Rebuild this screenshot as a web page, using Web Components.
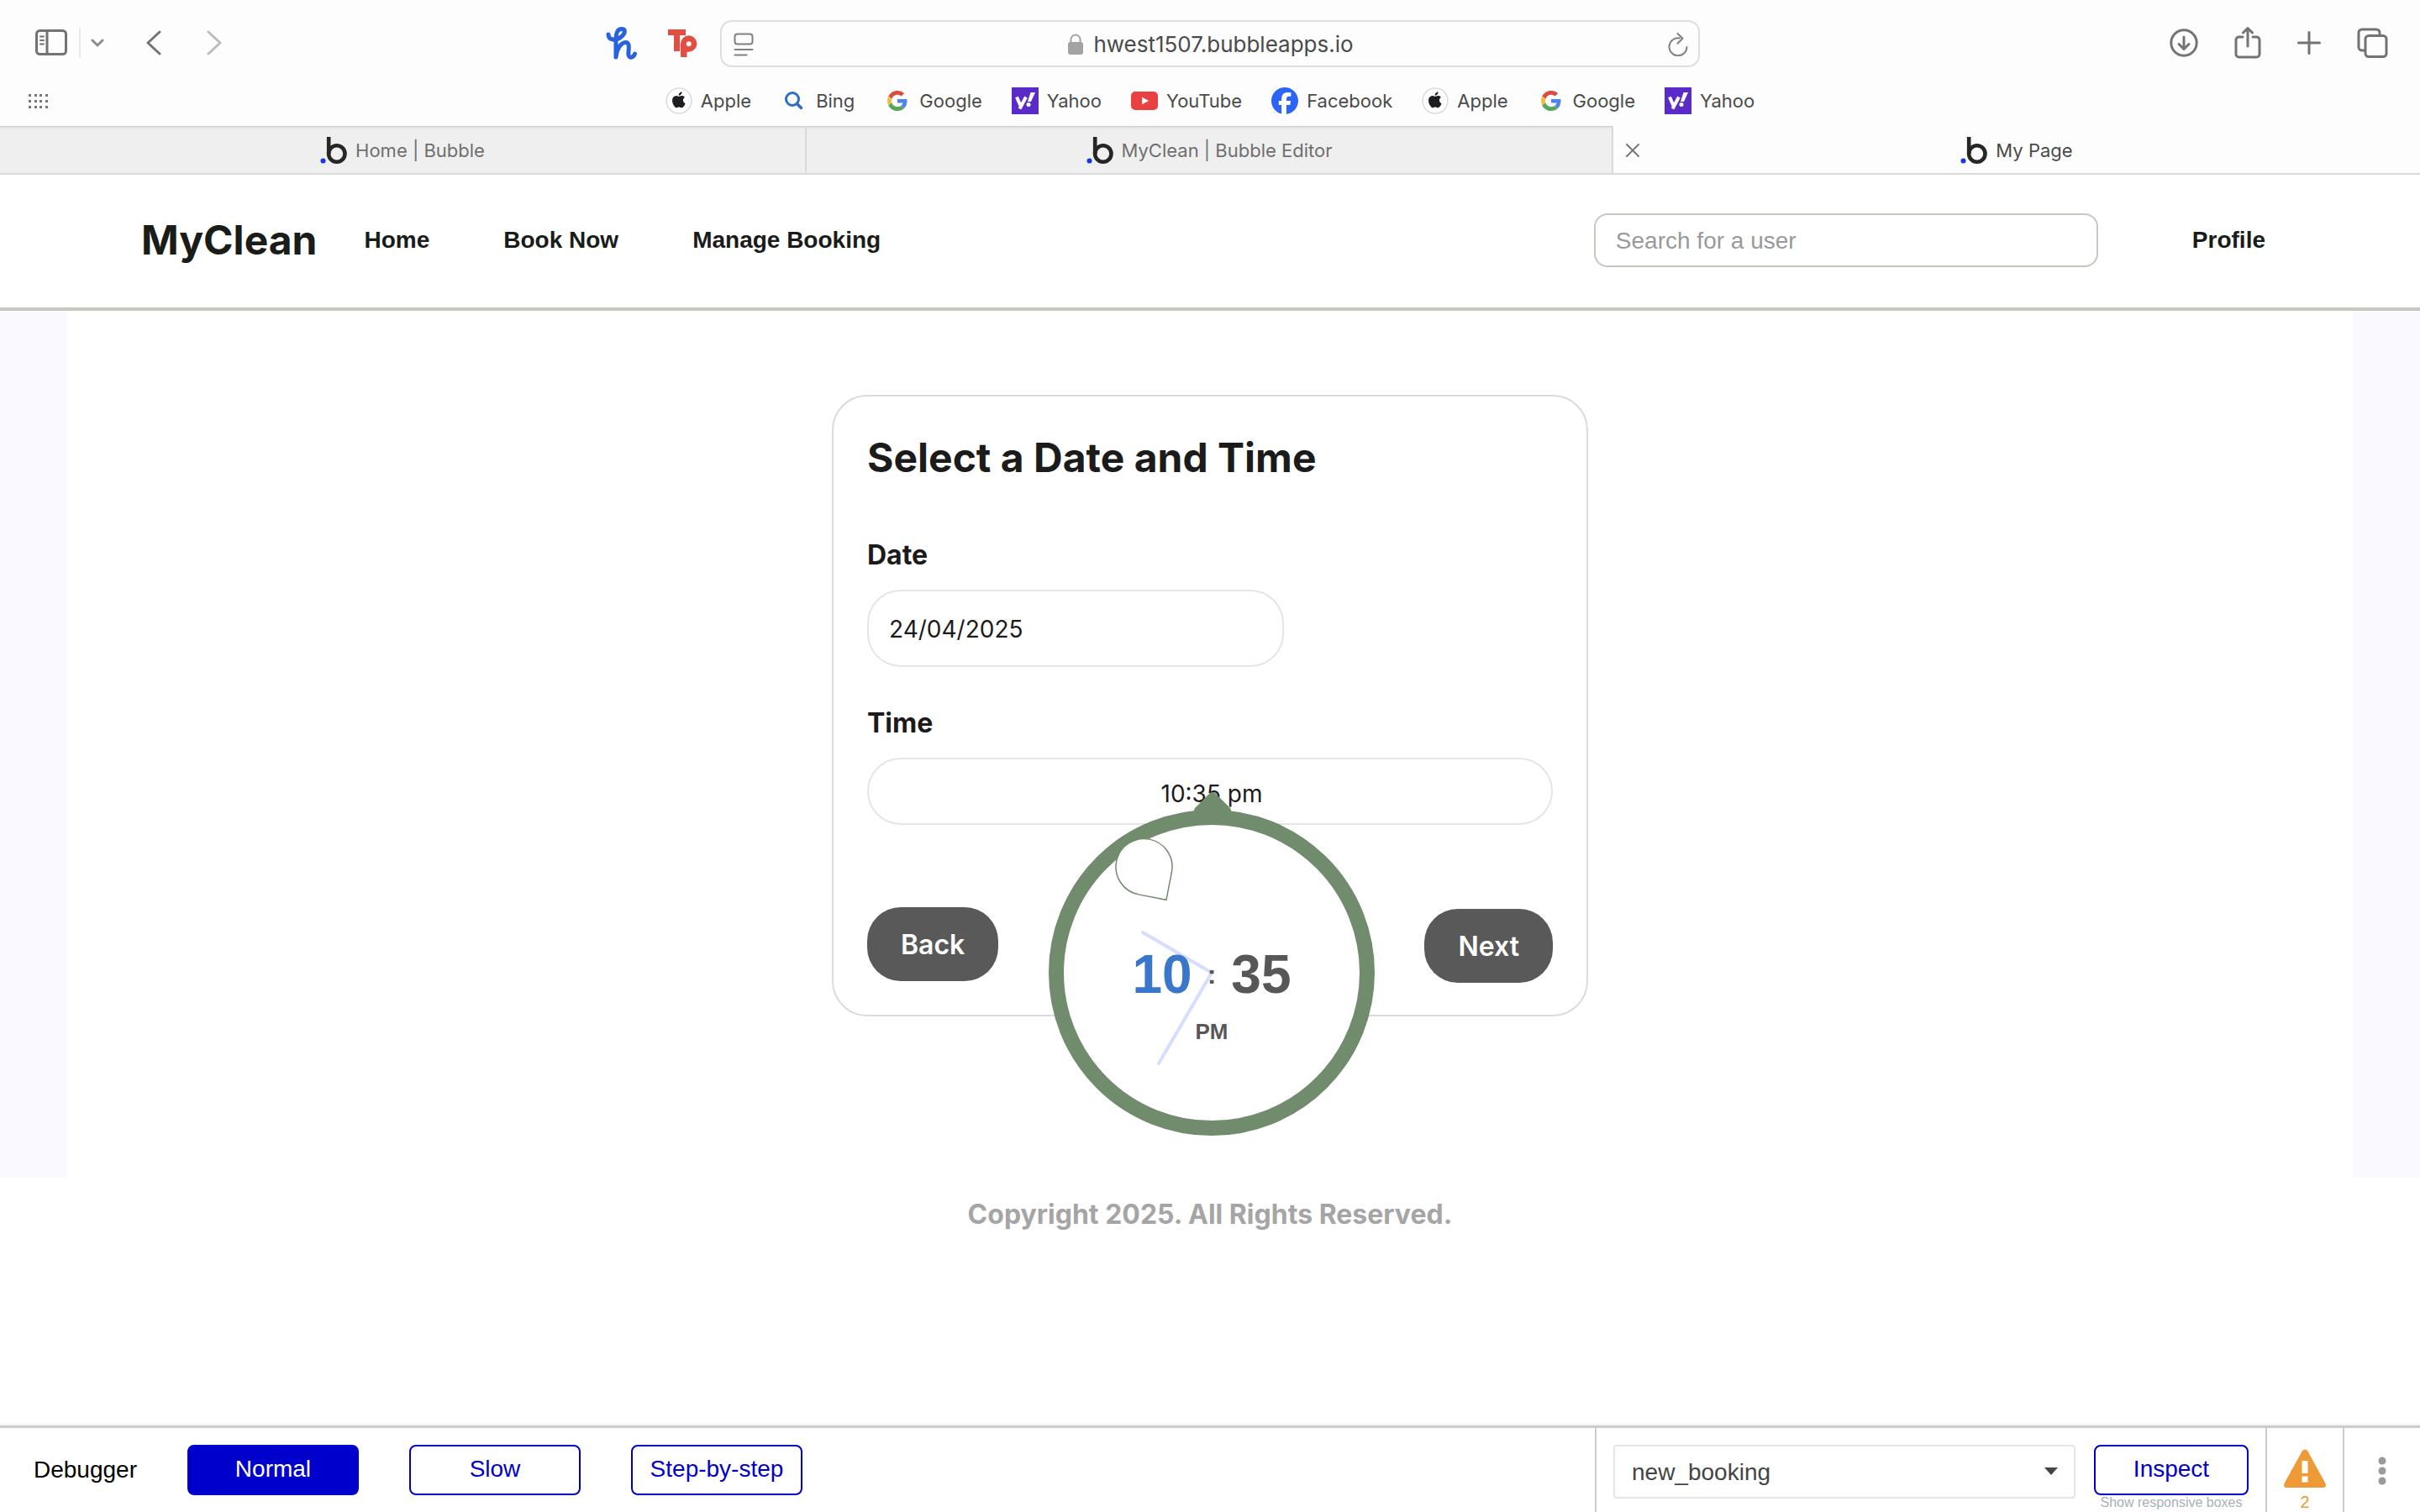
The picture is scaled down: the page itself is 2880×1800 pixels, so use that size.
<!DOCTYPE html>
<html lang="en">
<head>
<meta charset="utf-8">
<title>My Page</title>
<style>
  body { margin: 0; background: #fff; font-family: "Liberation Sans", Arial, sans-serif; }
</style>
</head>
<body>
<my-app></my-app>
<script>
const define = (name, html, setup) => {
  const template = document.createElement('template');
  template.innerHTML = '<style>*{box-sizing:border-box}button,input,select{font:inherit;color:inherit;margin:0}button{cursor:pointer}a{color:inherit;text-decoration:none}</style>' + html;
  customElements.define(name, class extends HTMLElement {
    constructor() {
      super();
      this.attachShadow({ mode: 'open' }).append(document.importNode(template.content, true));
    }
    connectedCallback() { if (setup) setup(this, this.shadowRoot); }
  });
};

/* [width, height, markup] */
const line = 'fill="none" stroke="currentColor" stroke-linecap="round" stroke-linejoin="round"';
const ICONS = {
  sidebar: [38, 32, `<g ${line} stroke-width="3"><rect x="1.5" y="1.5" width="35" height="28" rx="4"/><path d="M14 2v27"/><path stroke-width="2" d="M6 8.500h4M6 13h4M6 17.500h4"/></g>`],
  down: [16, 10, `<path ${line} stroke-width="3" d="M2 2l6 6 6-6"/>`],
  back: [20, 30, `<path ${line} stroke-width="3" d="M17 2L3 15l14 13"/>`],
  forward: [20, 30, `<path ${line} stroke-width="3" d="M3 2l14 13L3 28"/>`],
  honey: [37, 39, `<path ${line} stroke-width="5" d="M3 9C3 16 12 17 18 12C24 7 23.500 2.500 18.500 2.500C13 2.500 12 9 12 16V36C12.500 27 18 18.500 23.500 18.500C30 18.500 26 30 27 33.500C28.500 38 33 36.500 34.500 32"/>`],
  teach: [37, 35, `<g fill="#e04f42"><path d="M1 1h21v7h-7v19H8V8H1z"/><path fill-rule="evenodd" d="M16 18a9.700 9.700 0 1 1 9.700 9.700H23.500V34H16zM25.700 15.300a3 3 0 1 0 0 6 3 3 0 1 0 0-6z" stroke="#fdfdfd" stroke-width="1" paint-order="stroke"/></g>`],
  reader: [24, 28, `<g ${line} stroke-width="2"><rect x="1.500" y="1.500" width="21" height="12" rx="3"/><path d="M1.500 20h21M1.500 26.500h14"/></g>`],
  lock: [18, 26, `<rect y="10" width="18" height="15" rx="3" fill="currentColor"/><path d="M3.500 11V7a5.500 5.500 0 0 1 11 0v4" fill="none" stroke="currentColor" stroke-width="2"/>`],
  reload: [24, 28, `<path ${line} stroke-width="2" d="M14 6.500A10.500 10.500 0 1 0 22.500 17M11.500 1l6 5.700-6 6"/>`],
  download: [34, 34, `<g ${line} stroke-width="3"><circle cx="17" cy="17" r="15.200"/><path d="M17 10v14M11 18.500l6 6 6-6"/></g>`],
  share: [32, 38, `<g ${line} stroke-width="3"><path d="M10 12H5.500A3.500 3.500 0 0 0 2 15.500V32.500A3.500 3.500 0 0 0 5.500 36H26.500A3.500 3.500 0 0 0 30 32.500V15.500A3.500 3.500 0 0 0 26.500 12H22M16 2v21M10.500 7L16 1.700 21.500 7"/></g>`],
  plus: [28, 28, `<path ${line} stroke-width="3" d="M14 1.500v25M1.500 14h25"/>`],
  tabs: [37, 36, `<g ${line} stroke-width="3"><rect x="10" y="9.500" width="25" height="25" rx="4"/><path d="M9 27H6a4 4 0 0 1-4-4V6a4 4 0 0 1 4-4H23a4 4 0 0 1 4 4V9"/></g>`],
  grid: [24, 18, [1, 8, 15].map(y => [0, 7, 13, 20].map(x => `<rect x="${x}" y="${y}" width="3" height="3" fill="currentColor"/>`).join('')).join('')],
  close: [16, 16, `<path ${line} stroke-width="2" d="M1 1l14 14M15 1L1 15"/>`],
  apple: [32, 32, `<circle cx="16" cy="16" r="15" fill="#fff" stroke="#dcdcdc" stroke-width="1.500"/><path fill="#1d1d1f" transform="translate(6.300 5.300) scale(.79)" d="M12.152 6.896c-.948 0-2.415-1.078-3.960-1.040-2.040.027-3.910 1.183-4.961 3.014-2.117 3.675-.546 9.103 1.519 12.090 1.013 1.454 2.208 3.090 3.792 3.039 1.520-.065 2.090-.987 3.935-.987 1.831 0 2.350.987 3.960.948 1.637-.026 2.676-1.480 3.676-2.948 1.156-1.688 1.636-3.325 1.662-3.415-.039-.013-3.182-1.221-3.220-4.857-.026-3.040 2.480-4.494 2.597-4.559-1.429-2.090-3.623-2.324-4.390-2.376-2-.156-3.675 1.090-4.610 1.090zM15.530 3.830c.843-1.012 1.400-2.427 1.245-3.830-1.207.052-2.662.805-3.532 1.818-.780.896-1.454 2.338-1.273 3.714 1.338.104 2.715-.688 3.559-1.701"/>`],
  bing: [32, 32, `<g fill="none" stroke="#2f6fbd" stroke-linecap="round"><circle cx="14" cy="14" r="7.500" stroke-width="3"/><path stroke-width="3.500" d="M19.500 19.500l5 5"/></g>`],
  google: [32, 32, `<g transform="translate(4 4) scale(.5)"><path fill="#dc4b3e" d="M24 9.500c3.540 0 6.710 1.220 9.210 3.600l6.850-6.850C35.900 2.380 30.470 0 24 0 14.620 0 6.510 5.380 2.560 13.220l7.980 6.190C12.430 13.720 17.740 9.500 24 9.500z"/><path fill="#5083ec" d="M46.980 24.550c0-1.570-.150-3.090-.380-4.550H24v9.020h12.940c-.580 2.960-2.260 5.480-4.780 7.180l7.730 6c4.510-4.180 7.090-10.360 7.090-17.650z"/><path fill="#f2bd42" d="M10.530 28.590c-.480-1.450-.760-2.990-.760-4.590s.270-3.140.760-4.590l-7.980-6.190C.920 16.460 0 20.120 0 24c0 3.880.920 7.540 2.560 10.780l7.970-6.190z"/><path fill="#58a65c" d="M24 48c6.480 0 11.930-2.130 15.890-5.810l-7.730-6c-2.150 1.450-4.920 2.300-8.160 2.300-6.260 0-11.570-4.220-13.470-9.910l-7.980 6.190C6.510 42.620 14.620 48 24 48z"/></g>`],
  yahoo: [32, 32, `<rect width="32" height="32" fill="#5a2bc8"/><path fill="none" stroke="#fff" stroke-width="4" d="M6 11.500l5 11.500M17 11.500L9.500 25.500"/><path fill="#fff" d="M22.500 6h5.500l-5 11h-4z"/><circle cx="20" cy="20.500" r="2.500" fill="#fff"/>`],
  youtube: [32, 32, `<rect y="5" width="32" height="22" rx="5" fill="#ea4040"/><path fill="#fff" d="M13 11.500l8 4.500-8 4.500z"/>`],
  facebook: [32, 32, `<circle cx="16" cy="16" r="15" fill="#fff"/><path fill="#2b64f6" transform="scale(1.333)" d="M9.101 23.691v-7.980H6.627v-3.667h2.474v-1.580c0-4.085 1.848-5.978 5.858-5.978.401 0 .955.042 1.468.103a8.680 8.680 0 0 1 1.141.195v3.325a8.623 8.623 0 0 0-.653-.036 26.805 26.805 0 0 0-.733-.009c-.707 0-1.259.096-1.675.309a1.686 1.686 0 0 0-.679.622c-.258.420-.374.995-.374 1.752v1.297h3.919l-.386 2.103-.287 1.564h-3.246v8.245C19.396 23.238 24 18.179 24 12.044c0-6.627-5.373-12-12-12s-12 5.373-12 12c0 5.628 3.874 10.350 9.101 11.647Z"/>`],
  bubble: [32, 32, `<circle cx="3.500" cy="28.500" r="3" fill="#1433ff"/><circle cx="19.800" cy="20" r="9.700" fill="none" stroke="#262626" stroke-width="4.600"/><path d="M10.200 0v20" stroke="#262626" stroke-width="4.600"/>`],
  caret: [18, 10, `<path d="M1 0h16l-8 9z" fill="currentColor"/>`],
  warning: [50, 46, `<path fill="currentColor" d="M22 2Q25-1 28 2L49.500 41Q51 46 47 46H3Q-1 46 .500 41z"/><path fill="#fff" d="M21.500 14h7v15h-7zM21.500 32.500h7v7h-7z"/>`],
  more: [10, 36, `<g fill="currentColor"><circle cx="5" cy="6" r="4.500"/><circle cx="5" cy="18" r="4.500"/><circle cx="5" cy="30" r="4.500"/></g>`]
};
define('app-icon', '<style>:host{display:block;flex:none;line-height:0}</style><span></span>', (el, root) => {
  const [w, h, body] = ICONS[el.getAttribute('name')];
  root.querySelector('span').innerHTML = `<svg width="${w}" height="${h}" viewBox="0 0 ${w} ${h}" aria-hidden="true">${body}</svg>`;
});

define('icon-button', `
<style>
  :host { display: block; flex: none; }
  button { display: block; padding: 0; border: 0; background: none; }
</style>
<button type="button"><slot></slot></button>`, (el, root) => {
  root.querySelector('button').setAttribute('aria-label', el.getAttribute('label'));
});

define('browser-toolbar', `
<style>
  :host { display: grid; grid-template-columns: 1fr minmax(0, 1166px) 1fr; padding-top: 24px; color: #737373; }
  .side { display: flex; align-items: center; padding-bottom: 2px; }
  .left { padding-left: 42px; padding-right: 26px; }
  .right { justify-content: flex-end; gap: 43px; padding-right: 38px; }
  .rule { width: 2px; height: 36px; margin: 0 12px 0 14px; background: #e9e9e9; }
  .down { color: #8c8c8c; }
  .back { margin: 0 52px 0 49px; }
  .forward { color: #bdbdbd; }
  .ext { display: flex; align-items: center; gap: 36px; margin-left: auto; color: #2a62dd; }
  .address { display: flex; align-items: center; justify-content: space-between; height: 56px; padding: 2px 12px 0 14px; border: 2px solid #dedede; border-radius: 14px; color: #808080; }
  .url { display: flex; align-items: center; gap: 12px; font: 26px/32px Inter, sans-serif; color: #4a4a4a; }
  .lock { color: #a3a3a3; }
</style>
<div class="side left">
  <icon-button label="Sidebar"><app-icon name="sidebar"></app-icon></icon-button>
  <span class="rule"></span>
  <icon-button class="down" label="Tab groups"><app-icon name="down"></app-icon></icon-button>
  <icon-button class="back" label="Back"><app-icon name="back"></app-icon></icon-button>
  <icon-button class="forward" label="Forward"><app-icon name="forward"></app-icon></icon-button>
  <div class="ext">
    <icon-button label="Honey"><app-icon name="honey"></app-icon></icon-button>
    <icon-button label="Extension"><app-icon name="teach"></app-icon></icon-button>
  </div>
</div>
<div class="address">
  <icon-button label="Reader"><app-icon name="reader"></app-icon></icon-button>
  <div class="url"><app-icon class="lock" name="lock"></app-icon><span>hwest1507.bubbleapps.io</span></div>
  <icon-button label="Reload"><app-icon name="reload"></app-icon></icon-button>
</div>
<div class="side right">
  <icon-button label="Downloads"><app-icon name="download"></app-icon></icon-button>
  <icon-button label="Share"><app-icon name="share"></app-icon></icon-button>
  <icon-button label="New tab"><app-icon name="plus"></app-icon></icon-button>
  <icon-button label="Tab overview"><app-icon name="tabs"></app-icon></icon-button>
</div>`);

define('bookmark-link', `
<style>
  :host { display: block; }
  a { display: flex; align-items: center; gap: 10px; font: 22px/32px Inter, sans-serif; color: #4a4a4a; }
</style>
<a href="#"><span></span><slot></slot></a>`, (el, root) => {
  root.querySelector('span').innerHTML = `<app-icon name="${el.getAttribute('icon')}"></app-icon>`;
});

define('bookmark-bar', `
<style>
  :host { display: grid; grid-template-columns: 1fr auto 1fr; align-items: center; padding: 24px 0 14px; }
  .grid { padding-left: 34px; color: #777; }
  nav { display: flex; gap: 35px; }
</style>
<icon-button class="grid" label="Favourites"><app-icon name="grid"></app-icon></icon-button>
<nav>
  <bookmark-link icon="apple">Apple</bookmark-link>
  <bookmark-link icon="bing">Bing</bookmark-link>
  <bookmark-link icon="google">Google</bookmark-link>
  <bookmark-link icon="yahoo">Yahoo</bookmark-link>
  <bookmark-link icon="youtube">YouTube</bookmark-link>
  <bookmark-link icon="facebook">Facebook</bookmark-link>
  <bookmark-link icon="apple">Apple</bookmark-link>
  <bookmark-link icon="google">Google</bookmark-link>
  <bookmark-link icon="yahoo">Yahoo</bookmark-link>
</nav>`);

define('browser-tab', `
<style>
  :host { display: grid; grid-template-columns: 1fr auto 1fr; align-items: center; box-sizing: border-box; height: 58px; padding-top: 2px; border-right: 2px solid #dadada; border-bottom: 2px solid #dadada; background: linear-gradient(#c6c6c6, #e6e6e6 2px, #efefef 5px); font: 22px/32px Inter, sans-serif; color: #6f6f6f; }
  :host([active]) { border-right: 0; background: #fdfdfd; color: #4a4a4a; }
  .close { padding-left: 15px; color: #777; visibility: hidden; }
  :host([active]) .close { visibility: visible; }
  .title { display: flex; align-items: center; gap: 10px; }
</style>
<icon-button class="close" label="Close tab"><app-icon name="close"></app-icon></icon-button>
<div class="title"><app-icon name="bubble"></app-icon><slot></slot></div>`);

define('browser-chrome', `
<style>
  :host { display: block; background: #fdfdfd; }
  .tabs { display: grid; grid-template-columns: repeat(3, 1fr); }
</style>
<browser-toolbar></browser-toolbar>
<bookmark-bar></bookmark-bar>
<div class="tabs">
  <browser-tab>Home | Bubble</browser-tab>
  <browser-tab>MyClean | Bubble Editor</browser-tab>
  <browser-tab active>My Page</browser-tab>
</div>`);

define('site-header', `
<style>
  :host { display: flex; align-items: center; box-sizing: border-box; height: 162px; padding: 0 184px 2px 168px; border-bottom: 4px solid #c2c9bf; font-weight: 700; font-size: 28px; line-height: 32px; color: #191c19; }
  .brand { font: 700 48px/58px Inter, sans-serif; }
  nav { display: flex; gap: 88px; margin-left: 56px; }
  input { width: 600px; height: 64px; margin: 0 112px 0 auto; padding: 2px 24px 0; border: 2px solid #c2c9bf; border-radius: 16px; background: #fff; font-weight: 400; outline: 0; }
  input::placeholder { color: #999; opacity: 1; }
</style>
<a class="brand" href="#">MyClean</a>
<nav><a href="#">Home</a><a href="#">Book Now</a><a href="#">Manage Booking</a></nav>
<input type="search" placeholder="Search for a user" aria-label="Search for a user">
<a href="#">Profile</a>`);

define('clock-picker', `
<style>
  :host { display: grid; width: 388px; height: 388px; color: #575757; font-family: "Liberation Sans", Arial, sans-serif; font-weight: 700; }
  svg { grid-area: 1 / 1; overflow: visible; }
  .face { grid-area: 1 / 1; display: flex; flex-direction: column; align-items: center; padding-top: 164px; }
  .time { display: flex; align-items: center; gap: 18px; font-size: 64px; line-height: 64px; }
  .colon { font-size: 32px; line-height: 64px; }
  button { display: block; padding: 0; border: 0; background: none; line-height: inherit; }
  .hour { color: #3a76c9; }
  .half { margin-top: 20px; font-size: 26px; line-height: 32px; }
</style>
<svg viewBox="0 0 388 388" aria-hidden="true">
  <rect x="-17" y="-17" width="34" height="34" rx="5" transform="translate(195 1) rotate(45)" fill="#718b6d"/>
  <circle cx="194" cy="194" r="185" fill="#fff" stroke="#718b6d" stroke-width="18"/>
  <path d="M0 33.500A33.500 33.500 0 1 1 33.500 0V33.500Z" transform="translate(113.500 68) rotate(11)" fill="#fff" stroke="#718b6d" stroke-width="1.500"/>
  <path d="M112 146L194 194L131 302" fill="none" stroke="#d5deff" stroke-width="4" stroke-linecap="round"/>
</svg>
<div class="face">
  <div class="time"><button type="button" class="hour">10</button><span class="colon">:</span><button type="button">35</button></div>
  <button type="button" class="half">PM</button>
</div>`);

define('booking-card', `
<style>
  :host { display: block; box-sizing: border-box; width: 900px; max-width: 100%; padding: 44px 40px 38px; border: 2px solid #dbdbdb; border-radius: 42px; font-family: Inter, sans-serif; color: #1b1b1b; }
  h1 { margin: 0 0 67px; font-size: 48px; font-weight: 700; line-height: 58px; }
  label { display: block; margin-bottom: 21px; font-size: 32px; font-weight: 700; line-height: 40px; }
  input { display: block; border: 2px solid #e5e5e5; border-radius: 40px; background: #fff; font-size: 28px; outline: 0; }
  .date { width: 496px; height: 92px; margin-bottom: 47px; padding: 2px 24px 0; }
  .time { position: relative; }
  .time input { width: 100%; height: 80px; padding: 6px 0 0 4px; text-align: center; }
  clock-picker { position: absolute; top: 62px; left: calc(50% - 192px); }
  .actions { display: flex; justify-content: space-between; height: 90px; margin-top: 98px; }
  .actions button { height: 88px; padding: 0 40px; border: 0; border-radius: 40px; background: #595959; color: #fff; font-size: 32px; font-weight: 600; }
  .next { align-self: flex-end; }
</style>
<h1>Select a Date and Time</h1>
<label for="date">Date</label>
<input class="date" id="date" type="text" value="24/04/2025">
<label for="time">Time</label>
<div class="time"><input id="time" type="text" value="10:35 pm"><clock-picker></clock-picker></div>
<div class="actions"><button type="button">Back</button><button type="button" class="next">Next</button></div>`);

define('outline-button', `
<style>
  :host { display: block; width: 204px; }
  button { display: block; width: 100%; height: 60px; padding: 0 0 2px; border: 2px solid #0000cc; border-radius: 8px; background: #fff; color: #0000cc; font-size: 28px; line-height: 32px; }
  :host([filled]) button { background: #0000cc; color: #fff; }
</style>
<button type="button"><slot></slot></button>`);

define('debug-bar', `
<style>
  :host { display: flex; box-sizing: border-box; height: 103px; border-top: 3px solid #ccc; box-shadow: 0 0 4px rgba(0,0,0,.15); background: #fff; font-size: 28px; line-height: 32px; color: #000; }
  .modes { display: flex; flex: 1; align-items: center; gap: 60px; padding-left: 40px; }
  .panel { display: flex; align-items: flex-start; padding: 20px 20px 0; border-left: 2px solid #ccc; }
  .inspect { gap: 22px; }
  .select { display: grid; align-items: center; width: 550px; color: #444; }
  select { grid-area: 1 / 1; width: 100%; height: 64px; padding: 2px 20px 0; border: 2px solid #e5e5e5; border-radius: 4px; background: #fff; appearance: none; outline: 0; }
  .select app-icon { grid-area: 1 / 1; justify-self: end; margin-right: 20px; pointer-events: none; }
  .column { display: flex; flex-direction: column; align-items: center; }
  .inspect outline-button { width: 184px; }
  small { font-size: 16px; line-height: 18px; color: #a5b1b5; }
  .issues { width: 92px; padding: 25px 0 0; color: #ed9a37; }
  .issues b { padding-top: 5px; font-size: 20px; font-weight: 400; line-height: 24px; }
  .more { width: 92px; padding: 33px 0 0; color: #9a9a9a; }
</style>
<div class="modes">
  <span>Debugger</span>
  <outline-button filled>Normal</outline-button>
  <outline-button>Slow</outline-button>
  <outline-button>Step-by-step</outline-button>
</div>
<div class="panel inspect">
  <div class="select"><select aria-label="Page element"><option>new_booking</option></select><app-icon name="caret"></app-icon></div>
  <div class="column"><outline-button>Inspect</outline-button><small>Show responsive boxes</small></div>
</div>
<div class="panel column issues"><app-icon name="warning"></app-icon><b>2</b></div>
<div class="panel column more"><icon-button label="More"><app-icon name="more"></app-icon></icon-button></div>`);

define('my-app', `
<style>
  :host { display: flex; flex-direction: column; min-height: 100vh; }
  main { padding: 0 80px; background: #faf9ff; }
  .sheet { display: flex; justify-content: center; padding: 100px 0 192px; background: #fff; }
  footer { flex: 1; padding-top: 24px; text-align: center; font: 700 32px/40px Inter, sans-serif; color: #a5a5a5; }
</style>
<browser-chrome></browser-chrome>
<site-header></site-header>
<main><div class="sheet"><booking-card></booking-card></div></main>
<footer>Copyright 2025. All Rights Reserved.</footer>
<debug-bar></debug-bar>`);
</script>
</body>
</html>
